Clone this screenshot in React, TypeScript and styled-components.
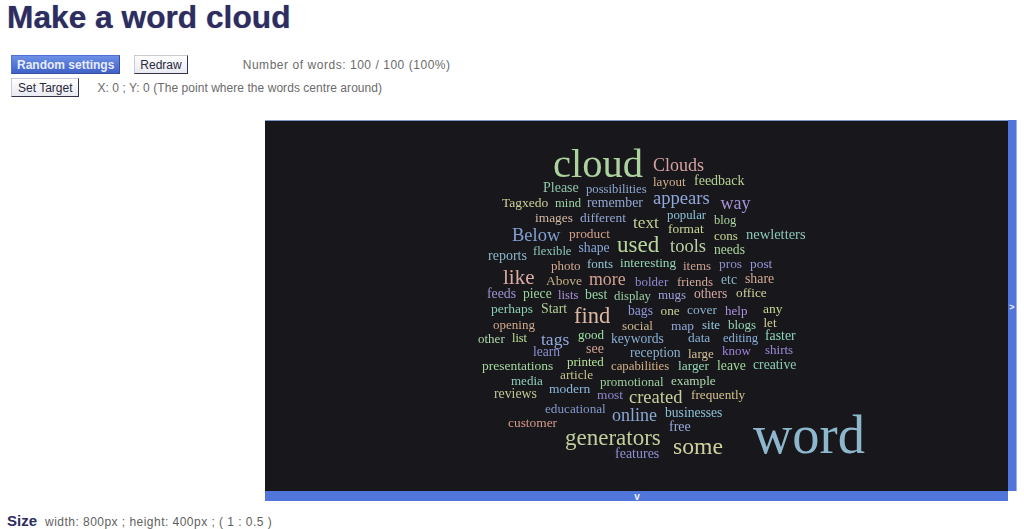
import React from "react";
import styled, { createGlobalStyle } from "styled-components";

const Global = createGlobalStyle`
  html, body { margin: 0; padding: 0; background: #fff; }
  body { font-family: "Liberation Sans", Arial, sans-serif; overflow: hidden; }
`;

const Page = styled.div`
  width: 1024px;
  height: 529px;
  overflow: hidden;
  position: relative;
`;

const Title = styled.h1`
  margin: 0;
  padding: 0 0 0 7px;
  height: 55px;
  font-size: 31.7px;
  line-height: 34px;
  font-weight: 700;
  color: #2d2d5f;
  text-shadow: 0 0 1px rgba(45, 45, 95, 0.6);
`;

const ControlRow = styled.div`
  display: flex;
  align-items: center;
  height: 19px;
  padding-left: 11px;
  margin-bottom: 4px;
`;

const Button = styled.button<{ $primary?: boolean; $gap?: number; $pad?: number }>`
  height: 19px;
  box-sizing: border-box;
  padding: 2px ${(p) => p.$pad ?? 5}px 0;
  margin: 0 ${(p) => p.$gap ?? 0}px 0 0;
  font-family: "Liberation Sans", Arial, sans-serif;
  font-size: 12px;
  line-height: 15px;
  font-weight: ${(p) => (p.$primary ? 700 : 400)};
  color: ${(p) => (p.$primary ? "#e8ecff" : "#2a2a3a")};
  background: ${(p) =>
    p.$primary ? "linear-gradient(#6d8fe6, #3f62c8)" : "linear-gradient(#ffffff, #e9e9f2)"};
  border: 1px solid ${(p) => (p.$primary ? "#4f71d4" : "#c9c9d2")};
  border-right-color: ${(p) => (p.$primary ? "#38509c" : "#33334a")};
  border-bottom-color: ${(p) => (p.$primary ? "#38509c" : "#33334a")};
  border-radius: 0;
`;

const Note = styled.span<{ $wide?: boolean }>`
  font-size: 12px;
  padding-top: 1px;
  color: #6b6b6b;
  letter-spacing: ${(p) => (p.$wide ? "0.54px" : "0.05px")};
`;

const Frame = styled.div`
  display: grid;
  grid-template-columns: 743px 9px;
  grid-template-rows: 371px 10px;
  width: 752px;
  margin: 23px 0 0 265px;
`;

const Stage = styled.div`
  position: relative;
  background: #17171c;
  border-top: 1px solid #7f97cf;
  box-sizing: border-box;
  overflow: hidden;
  filter: saturate(0.9);
`;

const SideHandle = styled.div`
  display: flex;
  align-items: center;
  justify-content: center;
  background: #5076dc;
  color: #eef2ff;
  font-size: 9px;
  font-weight: 700;
  border-right: 1px solid #9db1e8;
  box-sizing: border-box;
  padding-top: 3px;
`;

const BottomHandle = styled.div`
  display: flex;
  align-items: flex-end;
  justify-content: center;
  background: #5076dc;
  color: #eef2ff;
  font-size: 10px;
  line-height: 8px;
  font-weight: 700;
  overflow: hidden;
  padding-left: 1px;
`;

const Word = styled.span<{ $x: number; $y: number; $size: number; $color: string }>`
  position: absolute;
  left: ${(p) => p.$x - 265}px;
  top: ${(p) => p.$y - 120.5 - p.$size * 0.8375}px;
  font-family: "Liberation Serif", "Times New Roman", serif;
  font-size: ${(p) => p.$size}px;
  line-height: 1;
  white-space: nowrap;
  color: ${(p) => p.$color};
`;

const SizeRow = styled.div`
  display: flex;
  align-items: baseline;
  margin-top: 11px;
  padding-left: 7px;
  gap: 8px;
`;

const SizeLabel = styled.strong`
  font-size: 15px;
  color: #2d2d5f;
`;

const SizeText = styled.span`
  font-size: 12px;
  color: #5f5f5f;
  letter-spacing: 0.47px;
`;

type W = [string, number, number, number, string];

const green = "#a9d39a";
const words: W[] = [
  ["cloud", 553, 177, 40.5, green],
  ["Clouds", 653, 171, 18, "#d9a0a0"],
  ["layout", 653, 185, 13, "#d9b088"],
  ["feedback", 694, 185, 14, "#b4d28c"],
  ["Please", 543, 192, 14, "#8cc8a8"],
  ["possibilities", 586, 193, 12.7, "#8aa8d8"],
  ["Tagxedo", 502, 207, 13.5, "#cfcf90"],
  ["mind", 555, 207, 12.7, "#98d8a0"],
  ["remember", 587, 207, 13.8, "#90a8d8"],
  ["appears", 653, 204, 18.6, "#90a8e0"],
  ["way", 720.5, 209, 18, "#a890dc"],
  ["images", 535, 222, 13.4, "#d8b8a0"],
  ["different", 580, 222, 13.4, "#90a8d8"],
  ["text", 633, 228, 17.3, "#c0d090"],
  ["popular", 667, 219, 12.8, "#88c0d8"],
  ["blog", 714, 224, 12.5, "#a8d898"],
  ["format", 668, 233, 13.4, "#c8d890"],
  ["Below", 512, 241, 18.5, "#7fa0d8"],
  ["product", 569, 238, 13.4, "#d8a088"],
  ["cons", 714, 239, 13, "#c8d890"],
  ["newletters", 746, 239, 14.5, "#88c8b8"],
  ["used", 617, 252, 23, "#b8d898"],
  ["tools", 670, 252, 18.5, "#b8d0a0"],
  ["needs", 714, 254, 13.6, "#a8d898"],
  ["reports", 488, 260, 14, "#88b8d0"],
  ["flexible", 533, 255, 12.6, "#88c8b8"],
  ["shape", 578.5, 252, 13.7, "#88a8e0"],
  ["photo", 551, 269, 13, "#d8a890"],
  ["fonts", 587, 267, 13, "#90c8d8"],
  ["interesting", 620, 267, 13.3, "#90d8b0"],
  ["items", 683, 269, 13, "#d0a090"],
  ["pros", 719, 268, 13.4, "#9090d8"],
  ["post", 750, 268, 13.4, "#9898e0"],
  ["like", 503, 284, 21, "#e0a8a0"],
  ["Above", 546, 285, 13.5, "#c8b080"],
  ["more", 589, 285, 17.8, "#d8a090"],
  ["bolder", 635, 285, 13, "#9088d8"],
  ["friends", 677, 285, 13, "#d8a898"],
  ["etc", 721, 284, 13.7, "#88b8c8"],
  ["share", 745, 283, 13.8, "#d8a890"],
  ["feeds", 487, 298, 13.8, "#a090d8"],
  ["piece", 523, 298, 13.6, "#98d898"],
  ["lists", 558, 299, 12.6, "#a890e0"],
  ["best", 585, 299, 13.8, "#90d8a0"],
  ["display", 614, 300, 12.8, "#98d0a0"],
  ["mugs", 658, 298, 13, "#a0a0e0"],
  ["others", 694, 298, 13.6, "#d8a8a0"],
  ["office", 736, 297, 13.3, "#d0d098"],
  ["perhaps", 491, 313, 13.5, "#88d0b0"],
  ["Start", 541, 313, 13.8, "#b0d090"],
  ["find", 574, 323, 22.5, "#e0b8a0"],
  ["bags", 628, 315, 13.6, "#9098e0"],
  ["one", 660.5, 315, 13.3, "#c8d090"],
  ["cover", 687, 314, 13.5, "#88b0d0"],
  ["help", 725, 314, 13, "#b090e8"],
  ["any", 763, 313, 13.5, "#c0d888"],
  ["opening", 493, 328, 13, "#d8a888"],
  ["social", 622, 330, 13.3, "#d0b888"],
  ["map", 671, 330, 13.4, "#90a8e0"],
  ["site", 702, 328, 13, "#90c8e0"],
  ["blogs", 728, 328, 13, "#90d8b0"],
  ["let", 763.5, 326, 13, "#d0d090"],
  ["other", 478, 342, 13, "#a8d8a8"],
  ["list", 512, 342, 12.3, "#b8e090"],
  ["tags", 541, 345, 17.5, "#90a8e0"],
  ["good", 578, 338, 13, "#98e0a0"],
  ["keywords", 611, 343, 13.6, "#88b0d8"],
  ["data", 688, 342, 13.4, "#88b0d8"],
  ["editing", 723, 342, 12.6, "#88b0e0"],
  ["faster", 765, 340, 13.8, "#88d8b8"],
  ["learn", 533, 356, 13.6, "#8890d8"],
  ["see", 586, 353, 14, "#d8a090"],
  ["reception", 630, 357, 13.6, "#88b0d0"],
  ["large", 688, 357, 13, "#d8c090"],
  ["know", 722, 354, 13, "#a080e0"],
  ["shirts", 765, 353, 13, "#a088e0"],
  ["presentations", 482, 370, 13.5, "#a0d898"],
  ["printed", 567, 365, 13, "#b0e090"],
  ["capabilities", 611, 370, 12.8, "#d8b080"],
  ["larger", 678, 370, 13.4, "#90d8b0"],
  ["leave", 717, 370, 13.7, "#a0d898"],
  ["creative", 753, 369, 13.7, "#88d0b0"],
  ["media", 511, 384, 13, "#88d0b8"],
  ["article", 560, 379, 13.3, "#c0c088"],
  ["promotional", 600, 385, 13, "#98d098"],
  ["example", 671, 385, 13.2, "#a8d8a8"],
  ["reviews", 494, 398, 13.8, "#c0c890"],
  ["modern", 549, 393, 13.5, "#88b8e0"],
  ["most", 597, 399, 13.4, "#9088d8"],
  ["created", 629, 403, 18.5, "#c8d098"],
  ["frequently", 691, 399, 13.2, "#d8c088"],
  ["educational", 545, 413, 13.2, "#8098d0"],
  ["online", 612, 421, 18, "#88a8d8"],
  ["businesses", 665, 417, 13.6, "#88c0d8"],
  ["customer", 508, 427, 13.4, "#d89888"],
  ["free", 669, 431, 14, "#98a8e0"],
  ["generators", 565, 445, 23, "#c0d098"],
  ["some", 673, 454, 23.7, "#d0d098"],
  ["features", 615, 458, 14, "#9090d8"],
  ["word", 753, 453, 54.5, "#8ab8d0"],
];

export default function App() {
  return (
    <Page>
      <Global />
      <Title>Make a word cloud</Title>
      <ControlRow>
        <Button $primary $gap={14}>Random settings</Button>
        <Button $gap={55}>Redraw</Button>
        <Note $wide>Number of words: 100 / 100 (100%)</Note>
      </ControlRow>
      <ControlRow>
        <Button $pad={6} $gap={18}>Set Target</Button>
        <Note>X: 0 ; Y: 0 (The point where the words centre around)</Note>
      </ControlRow>
      <Frame>
        <Stage>
          {words.map(([t, x, y, s, c]) => (
            <Word key={t} $x={x} $y={y} $size={s} $color={c}>{t}</Word>
          ))}
        </Stage>
        <SideHandle>&gt;</SideHandle>
        <BottomHandle>v</BottomHandle>
      </Frame>
      <SizeRow>
        <SizeLabel>Size</SizeLabel>
        <SizeText>width: 800px ; height: 400px ; ( 1 : 0.5 )</SizeText>
      </SizeRow>
    </Page>
  );
}
